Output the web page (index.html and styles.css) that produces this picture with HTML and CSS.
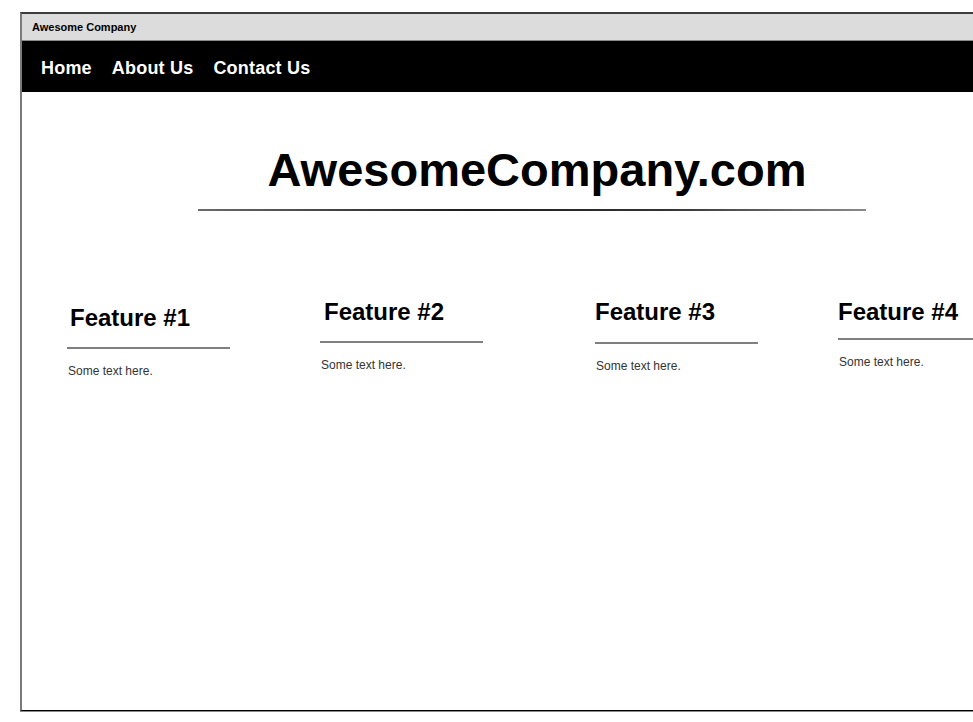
FILE: index.html
```html
<!DOCTYPE html>
<html lang="en">
<head>
<meta charset="utf-8">
<title>Awesome Company</title>
<link rel="stylesheet" href="styles.css">
</head>
<body>
<div class="window">
  <div class="titlebar">Awesome Company</div>
  <nav class="nav">
    <span class="nav-item">Home</span>
    <span class="nav-item">About Us</span>
    <span class="nav-item">Contact Us</span>
  </nav>
  <header class="hero">
    <h1 class="hero-title">AwesomeCompany.com</h1>
    <div class="hero-rule"></div>
  </header>
  <section class="features">
    <div class="feature feature-1">
      <h2 class="feature-title">Feature #1</h2>
      <div class="feature-rule"></div>
      <p class="feature-text">Some text here.</p>
    </div>
    <div class="feature feature-2">
      <h2 class="feature-title">Feature #2</h2>
      <div class="feature-rule"></div>
      <p class="feature-text">Some text here.</p>
    </div>
    <div class="feature feature-3">
      <h2 class="feature-title">Feature #3</h2>
      <div class="feature-rule"></div>
      <p class="feature-text">Some text here.</p>
    </div>
    <div class="feature feature-4">
      <h2 class="feature-title">Feature #4</h2>
      <div class="feature-rule"></div>
      <p class="feature-text">Some text here.</p>
    </div>
  </section>
</div>
</body>
</html>
```

FILE: styles.css
```css
html, body {
  margin: 0;
  padding: 0;
  background: #ffffff;
  overflow: hidden;
}

body {
  font-family: "Liberation Sans", Arial, sans-serif;
  width: 973px;
  height: 722px;
}

.window {
  margin: 12px 0 0 20px;
  width: 953px;
  height: 699px;
  box-sizing: border-box;
  border-top: 2px solid #3c3c3c;
  border-left: 2px solid #7a7a7a;
  border-bottom: 1px solid #000;
  box-shadow: 0 1px 0 #8a8a8a;
  background: #fff;
  overflow: hidden;
}

.titlebar {
  height: 26px;
  line-height: 26px;
  background: #dcdcdc;
  border-bottom: 1px solid #8a8a8a;
  padding-left: 10px;
  font-family: "Comic Sans MS", "Liberation Sans", sans-serif;
  font-size: 11px;
  font-weight: bold;
  color: #000;
}

.nav {
  height: 51px;
  box-sizing: border-box;
  background: #000;
  display: flex;
  align-items: center;
  gap: 20px;
  padding: 3px 0 0 19px;
}

.nav-item {
  font-family: "Comic Sans MS", "Liberation Sans", sans-serif;
  font-size: 18px;
  font-weight: bold;
  color: #fff;
  letter-spacing: 0.2px;
}

.hero {
  margin: 55px 0 0 176px;
  width: 668px;
}

.hero-title {
  margin: 0;
  padding-left: 10px;
  text-align: center;
  font-size: 47px;
  line-height: 46.5px;
  font-weight: bold;
  color: #000;
}

.hero-rule {
  margin-top: 15px;
  height: 2px;
  background: linear-gradient(to right, #6a6a6a, #1e1e1e 40%, #333 70%, #8a8a8a);
}

.features {
  display: flex;
  align-items: flex-start;
  margin-top: 87px;
}

.feature {
  width: 163px;
  flex: none;
}

.feature-1 { margin-left: 45px; margin-top: 6px; }
.feature-2 { margin-left: 90px; }
.feature-3 { margin-left: 112px; }
.feature-4 { margin-left: 80px; width: 120px; }

.feature-title {
  margin: 0;
  font-size: 24px;
  line-height: 28px;
  font-weight: bold;
  color: #000;
  white-space: nowrap;
}

.feature-1 .feature-title { padding-left: 3px; }
.feature-2 .feature-title { padding-left: 4px; }

.feature-rule {
  height: 2px;
  background: #808080;
  margin-top: 15px;
}

.feature-3 .feature-rule { margin-top: 16px; }
.feature-4 .feature-rule { margin-top: 12px; width: 135px; }

.feature-text {
  margin: 15px 0 0 1px;
  font-size: 12px;
  line-height: 14px;
  color: #333;
  white-space: nowrap;
}
```
